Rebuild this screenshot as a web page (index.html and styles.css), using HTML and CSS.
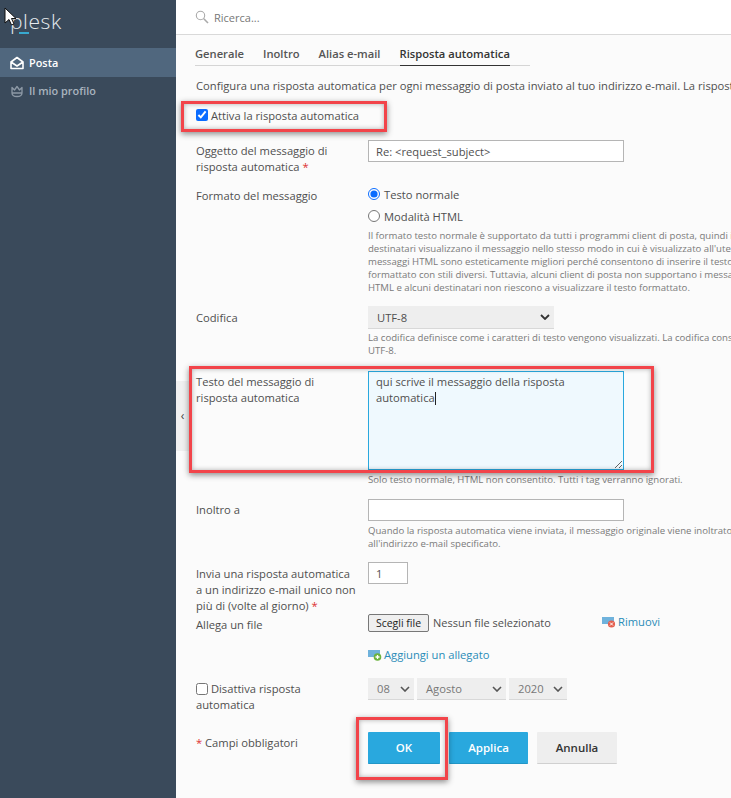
FILE: index.html
```html
<!DOCTYPE html>
<html lang="it">
<head>
  <meta charset="UTF-8">
  <title>Risposta automatica</title>
  <meta name="viewport" content="width=device-width, initial-scale=1">
  <link rel="stylesheet" href="styles.css">
</head>
<body>
  <div class="page">
    <!-- barra laterale -->
    <aside class="sidebar">
      <div class="logo">plesk<span class="logo-mark"></span></div>
      <a class="side-link active" href="#">
        <svg class="side-icon" viewBox="0 0 14 14" width="14" height="14"><path d="M1 6 7 1.500 13 6v6.500H1z M1 6l6 4 6-4" fill="none" stroke="#fff" stroke-width="1.600" stroke-linejoin="round"/></svg>
        Posta
      </a>
      <a class="side-link" href="#">
        <svg class="side-icon" viewBox="0 0 14 14" width="14" height="14"><path d="M2 3.500 4.500 6 7 2.500 9.500 6 12 3.500V9H2z M2 9c0 2 1.500 3.500 5 3.500S12 11 12 9" fill="none" stroke="#8d99a6" stroke-width="1.300" stroke-linejoin="round"/></svg>
        Il mio profilo
      </a>
    </aside>

    <div class="collapse-handle">‹</div>

    <main class="main">
      <div class="searchbar">
        <svg viewBox="0 0 14 14" width="14" height="14"><circle cx="5.500" cy="5.500" r="4.200" fill="none" stroke="#a9a9a9" stroke-width="1.100"/><path d="M8.800 8.800 13 13" stroke="#a9a9a9" stroke-width="1.600"/></svg>
        <span>Ricerca...</span>
      </div>

      <div class="content">
        <nav class="tabs">
          <a href="#">Generale</a>
          <a href="#">Inoltro</a>
          <a href="#">Alias e-mail</a>
          <a class="active" href="#">Risposta automatica</a>
        </nav>

        <p class="intro">Configura una risposta automatica per ogni messaggio di posta inviato al tuo indirizzo e-mail. La risposta automatica</p>

        <label class="check-row">
          <input type="checkbox" checked>
          Attiva la risposta automatica
        </label>

        <div class="row row-subject">
          <div class="label">Oggetto del messaggio di<br>risposta automatica <span class="req">*</span></div>
          <div class="field"><input class="text wide" type="text" value="Re: &lt;request_subject&gt;"></div>
        </div>

        <div class="row row-format">
          <div class="label">Formato del messaggio</div>
          <div class="field">
            <label class="radio"><input type="radio" name="fmt" checked> Testo normale</label>
            <label class="radio"><input type="radio" name="fmt"> Modalità HTML</label>
            <div class="help">Il formato testo normale è supportato da tutti i programmi client di posta, quindi i<br>destinatari visualizzano il messaggio nello stesso modo in cui è visualizzato all'utente. I<br>messaggi HTML sono esteticamente migliori perché consentono di inserire il testo<br>formattato con stili diversi. Tuttavia, alcuni client di posta non supportano i messaggi<br>HTML e alcuni destinatari non riescono a visualizzare il testo formattato.</div>
          </div>
        </div>

        <div class="row row-encoding">
          <div class="label">Codifica</div>
          <div class="field">
            <div class="select sel-enc">UTF-8<svg viewBox="0 0 10 6" width="10" height="6"><path d="M1 1l4 4 4-4" fill="none" stroke="#333" stroke-width="1.800"/></svg></div>
            <div class="help">La codifica definisce come i caratteri di testo vengono visualizzati. La codifica consigliata è<br>UTF-8.</div>
          </div>
        </div>

        <div class="row row-body">
          <div class="label">Testo del messaggio di<br>risposta automatica</div>
          <div class="field">
            <textarea class="area">qui scrive il messaggio della risposta automatica</textarea>
            <div class="help">Solo testo normale, HTML non consentito. Tutti i tag verranno ignorati.</div>
          </div>
        </div>

        <div class="row row-forward">
          <div class="label">Inoltro a</div>
          <div class="field">
            <input class="text wide" type="text">
            <div class="help">Quando la risposta automatica viene inviata, il messaggio originale viene inoltrato<br>all'indirizzo e-mail specificato.</div>
          </div>
        </div>

        <div class="row row-limit">
          <div class="label">Invia una risposta automatica<br>a un indirizzo e-mail unico non<br>più di (volte al giorno) <span class="req">*</span></div>
          <div class="field"><input class="text small" type="text" value="1"></div>
        </div>

        <div class="row row-file">
          <div class="label">Allega un file</div>
          <div class="field file-field">
            <button class="file-btn" type="button">Scegli file</button>
            <span class="file-name">Nessun file selezionato</span>
            <a class="link remove" href="#">
              <svg viewBox="0 0 14 12" width="14" height="12"><rect x="0" y="1" width="12" height="7" fill="#6fb2dc"/><circle cx="9.500" cy="8" r="3.600" fill="#e5604f"/><path d="M8 6.500l3 3m0-3-3 3" stroke="#fff"/></svg>
              Rimuovi
            </a>
          </div>
        </div>

        <div class="row row-add">
          <div class="label"></div>
          <div class="field">
            <a class="link" href="#">
              <svg viewBox="0 0 14 12" width="14" height="12"><rect x="0" y="1" width="12" height="7" fill="#6fb2dc"/><circle cx="9.500" cy="8" r="3.800" fill="#6cb33f"/><path d="M7.500 8h4m-2-2v4" stroke="#fff" stroke-width="1.300"/></svg>
              Aggiungi un allegato
            </a>
          </div>
        </div>

        <div class="row row-off">
          <label class="label"><input type="checkbox"> Disattiva risposta<br>automatica</label>
          <div class="field date-field">
            <div class="select sel-day">08<svg viewBox="0 0 10 6" width="10" height="6"><path d="M1 1l4 4 4-4" fill="none" stroke="#555" stroke-width="1.600"/></svg></div>
            <div class="select sel-month">Agosto<svg viewBox="0 0 10 6" width="10" height="6"><path d="M1 1l4 4 4-4" fill="none" stroke="#555" stroke-width="1.600"/></svg></div>
            <div class="select sel-year">2020<svg viewBox="0 0 10 6" width="10" height="6"><path d="M1 1l4 4 4-4" fill="none" stroke="#555" stroke-width="1.600"/></svg></div>
          </div>
        </div>

        <div class="row row-actions">
          <div class="label"><span class="req">*</span> Campi obbligatori</div>
          <div class="field actions">
            <button class="btn primary btn-ok" type="button">OK</button>
            <button class="btn primary btn-apply" type="button">Applica</button>
            <button class="btn btn-cancel" type="button">Annulla</button>
          </div>
        </div>
      </div>
    </main>

    <!-- riquadri rossi, cursore di testo e puntatore sopra lo screenshot -->
    <div class="mark mark-check"></div>
    <div class="mark mark-body"></div>
    <div class="mark mark-ok"></div>
    <div class="caret"></div>
    <svg class="cursor" viewBox="0 0 14 20" width="14" height="20"><path d="M1 1v15l4-3.500 2.500 5.500 2.500-1-2.500-5.500H12z" fill="#fff" stroke="#111"/></svg>
  </div>
</body>
</html>
```

FILE: styles.css
```css
html, body {
  margin: 0;
  padding: 0;
  height: 100%;
  overflow: hidden;
}
body {
  background: #fbfbfb;
  font-family: 'Open Sans', 'Liberation Sans', Arial, sans-serif;
  font-size: 11.2px;
  color: #4f4f4f;
}
.page {
  position: relative;
  display: flex;
  width: 731px;
  height: 798px;
  overflow: hidden;
}
.sidebar {
  flex: 0 0 176px;
  background: #3a4a5b;
  color: #fff;
}
.logo {
  position: relative;
  height: 48px;
  padding-left: 10px;
  box-sizing: border-box;
  font-size: 21px;
  font-weight: 300;
  line-height: 42px;
  letter-spacing: 0.6px;
  color: #e6eaee;
}
.logo-mark {
  position: absolute;
  left: 19px;
  top: 32px;
  width: 10px;
  height: 1.5px;
  background: #38a9cf;
}
.side-link {
  display: flex;
  align-items: center;
  gap: 5px;
  height: 29px;
  padding-left: 10px;
  font-size: 10.9px;
  font-weight: 600;
  color: #a9b4bf;
  text-decoration: none;
}
.side-link.active {
  background: #50677e;
  color: #fff;
}
.side-link + .side-link {
  height: 27px;
  padding-bottom: 1px;
}
.collapse-handle {
  position: absolute;
  left: 176px;
  top: 381px;
  width: 13px;
  height: 70px;
  background: #f0f0f0;
  color: #444;
  font-size: 12px;
  line-height: 70px;
  text-align: center;
}
.main {
  flex: 1;
  min-width: 0;
}
.searchbar {
  display: flex;
  align-items: center;
  gap: 5px;
  height: 34px;
  padding-left: 19px;
  background: #fff;
  border-bottom: 1px solid #d9d9d9;
  color: #777;
  font-size: 11px;
}
.content {
  padding: 0 0 0 20px;
  white-space: nowrap;
}
.tabs {
  display: flex;
  gap: 19px;
  height: 31px;
  box-sizing: border-box;
  padding-top: 11px;
  margin-left: -1px;
  width: 335px;
  border-bottom: 1px solid #d5d5d5;
  font-weight: 600;
}
.tabs a {
  color: #555;
  text-decoration: none;
  height: 19px;
}
.tabs a.active {
  color: #333;
  border-bottom: 1px solid #333;
}
.intro {
  margin: 12px 0 0;
  line-height: 16px;
}
.check-row {
  display: flex;
  align-items: center;
  gap: 3px;
  height: 16px;
  margin-top: 13px;
}
.check-row input {
  margin: 0;
  width: 12px;
  height: 12px;
  accent-color: #0a6cff;
}
.row {
  display: flex;
}
.label {
  flex: 0 0 172px;
  line-height: 16px;
}
.field {
  flex: 1;
}
.req {
  color: #d33;
}
.row-subject { margin-top: 16px; padding-top: 1px; }
.row-subject .label { padding-top: 3px; }
.row-format { margin-top: 8px; }
.row-format .label { padding-top: 5px; }
.row-format .help { margin-top: 2px; }
.row-encoding { margin-top: 12px; }
.row-encoding .label { padding-top: 4px; }
.row-encoding .help { margin-top: 2px; }
.row-body { margin-top: 14px; }
.row-body .label { padding-top: 3px; }
.row-forward { margin-top: 13px; }
.row-forward .label { padding-top: 3px; }
.row-limit { margin-top: 12px; height: 52px; }
.row-limit .label { padding-top: 4px; }
.row-file { margin-top: 0; height: 32px; }
.row-file .label { padding-top: 3px; }
.row-add { height: 32px; box-sizing: border-box; padding-top: 1px; }
.row-off { margin-top: 0; height: 54px; }
.row-off .label { padding-top: 3px; }
.row-off .label input { margin: 0; width: 12px; height: 12px; vertical-align: -2px; }
.row-actions .label { padding-top: 3px; }
.text {
  box-sizing: border-box;
  display: block;
  height: 22px;
  padding: 0 7px;
  border: 1px solid #b5b5b5;
  background: #fff;
  color: #4f4f4f;
  font: inherit;
}
.wide { width: 256px; }
.small { width: 40px; }
.radio {
  display: flex;
  align-items: center;
  gap: 4px;
  height: 22px;
}
.radio input {
  margin: 0;
  width: 12px;
  height: 12px;
  accent-color: #0a6cff;
}
.help {
  margin-top: 3px;
  font-size: 9.6px;
  line-height: 13px;
  color: #7a7a7a;
}
.select {
  display: flex;
  align-items: center;
  justify-content: space-between;
  box-sizing: border-box;
  height: 22px;
  padding: 0 4px 0 9px;
  background: #eeeeee;
  border-bottom: 1px solid #d8d8d8;
}
.sel-enc { width: 186px; height: 23px; }
.sel-day { width: 46px; color: #777; }
.sel-month { width: 89px; color: #777; }
.sel-year { width: 58px; color: #777; }
.date-field {
  display: flex;
  gap: 3px;
}
.area {
  display: block;
  box-sizing: border-box;
  width: 256px;
  height: 99px;
  padding: 2px 7px;
  border: 1px solid #29a8de;
  background: #eff9fe;
  color: #4f4f4f;
  font: inherit;
  line-height: 16px;
}
.file-field {
  display: flex;
  align-items: flex-start;
}
.file-btn {
  box-sizing: border-box;
  width: 61px;
  height: 18px;
  padding: 0;
  border: 1px solid #777;
  border-radius: 2px;
  background: #efefef;
  color: #222;
  font: inherit;
  font-size: 10.5px;
}
.file-name {
  margin-left: 4px;
  width: 169px;
  line-height: 17px;
  font-size: 11px;
}
.link {
  display: inline-flex;
  align-items: center;
  gap: 2px;
  color: #2a8cb8;
  text-decoration: none;
}
.actions {
  display: flex;
  gap: 9px;
}
.row-actions { margin-top: 0; }
.btn {
  box-sizing: border-box;
  height: 32px;
  border: 0;
  border-bottom: 1px solid #d0d0d0;
  border-radius: 1px;
  background: #eeeeee;
  color: #333;
  font: inherit;
  font-size: 11.5px;
  font-weight: 600;
}
.btn.primary {
  background: #29a8de;
  border-bottom-color: #2296c6;
  color: #fff;
}
.btn-ok { width: 72px; }
.btn-apply { width: 79px; }
.btn-cancel { width: 80px; }
.mark {
  position: absolute;
  box-sizing: border-box;
  border: 3px solid #f2444a;
  box-shadow: 0 2px 6px rgba(0, 0, 0, 0.45), inset 0 0 5px rgba(0, 0, 0, 0.3);
}
.mark-check { left: 181px; top: 101px; width: 206px; height: 31px; }
.mark-body { left: 189px; top: 366px; width: 465px; height: 107px; }
.mark-ok { left: 356px; top: 717px; width: 92px; height: 63px; }
.caret {
  position: absolute;
  left: 435px;
  top: 392px;
  width: 1px;
  height: 13px;
  background: #222;
}
.cursor {
  position: absolute;
  left: 4px;
  top: 7px;
}
```
